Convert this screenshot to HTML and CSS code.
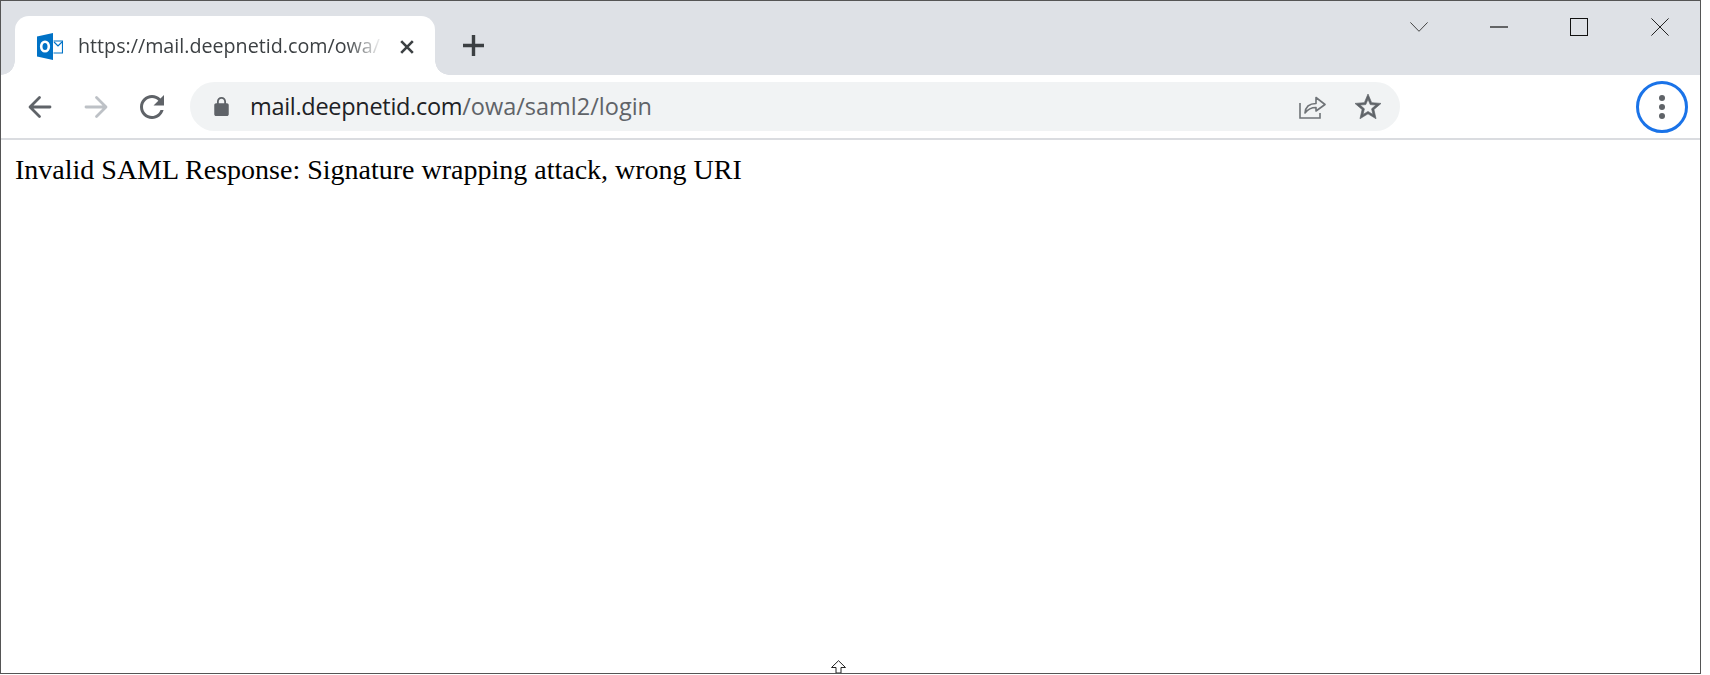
FILE: index.html
```html
<!DOCTYPE html>
<html lang="en">
<head>
<meta charset="utf-8">
<title>Invalid SAML Response</title>
<link rel="stylesheet" href="styles.css">
</head>
<body>
<div class="window">
  <header class="tabstrip">
    <div class="tab">
      <svg class="favicon" width="26" height="27" viewBox="0 0 26 27">
        <path d="M0 3.5 16 0V27L0 23.500Z" fill="#0072c6"/>
        <ellipse cx="8" cy="13.500" rx="3.800" ry="4.800" fill="none" stroke="#fff" stroke-width="2.600"/>
        <path d="M16.500 8H25.500V20H16.500" fill="#fff" stroke="#0072c6" stroke-width="1.200"/>
        <path d="M17 9 21 13 25 9" fill="none" stroke="#0072c6" stroke-width="1.200"/>
      </svg>
      <span class="tab-title">https://mail.deepnetid.com/owa/</span>
      <svg class="tab-close" width="14" height="14" viewBox="0 0 14 14"><path d="M1.200 1.200 12.800 12.800M12.800 1.200 1.200 12.800" stroke="#3c4043" stroke-width="2.600"/></svg>
    </div>
    <svg class="new-tab" width="21" height="21" viewBox="0 0 21 21"><path d="M10.500 0V21M0 10.500H21" stroke="#3c4043" stroke-width="3.400"/></svg>
    <div class="controls">
      <div class="control"><svg width="18" height="10" viewBox="0 0 18 10"><path d="M.4.400 9 9.300 17.600.400" fill="none" stroke="#444" stroke-width="1"/></svg></div>
      <div class="control"><svg width="18" height="2" viewBox="0 0 18 2"><path d="M0 1H18" stroke="#111" stroke-width="1.200"/></svg></div>
      <div class="control"><svg width="18" height="18" viewBox="0 0 18 18"><rect x=".5" y=".5" width="17" height="17" fill="none" stroke="#111" stroke-width="1"/></svg></div>
      <div class="control"><svg width="18" height="18" viewBox="0 0 18 18"><path d="M.4.400 17.600 17.600M17.600.400 .4 17.600" stroke="#222" stroke-width="1"/></svg></div>
    </div>
  </header>
  <nav class="toolbar">
    <svg class="nav-icon" width="24" height="24" viewBox="0 0 24 24"><path d="M22 12H2.500M11.500 2.500 2 12l9.500 9.500" fill="none" stroke="#5f6368" stroke-width="2.800" stroke-linecap="round" stroke-linejoin="round"/></svg>
    <svg class="nav-icon" width="24" height="24" viewBox="0 0 24 24"><path d="M2 12H21.500M12.500 2.500 22 12l-9.500 9.500" fill="none" stroke="#bdc1c6" stroke-width="2.800" stroke-linecap="round" stroke-linejoin="round"/></svg>
    <svg class="reload" width="24" height="24" viewBox="4 4 16 16"><path fill="#5f6368" d="M17.650 6.350C16.200 4.900 14.210 4 12 4c-4.420 0-7.990 3.580-7.990 8s3.570 8 7.990 8c3.730 0 6.840-2.550 7.730-6h-2.080c-.82 2.330-3.040 4-5.650 4-3.310 0-6-2.690-6-6s2.690-6 6-6c1.660 0 3.140.69 4.220 1.780L13 11h7V4l-2.350 2.350z"/></svg>
    <div class="omnibox">
      <svg class="lock" width="15" height="19" viewBox="4 1 16 21"><path fill="#5f6368" d="M18 8h-1V6c0-2.760-2.240-5-5-5S7 3.240 7 6v2H6c-1.100 0-2 .9-2 2v10c0 1.100.9 2 2 2h12c1.100 0 2-.9 2-2V10c0-1.100-.9-2-2-2zM9 6c0-1.660 1.340-3 3-3s3 1.340 3 3v2H9V6z"/></svg>
      <span class="url"><span class="host">mail.deepnetid.com</span>/owa/saml2/login</span>
      <svg class="share" width="27" height="24" viewBox="0 0 27 24"><path d="M1 8V23H21V18" fill="none" stroke="#6f7377" stroke-width="1.600"/><path d="M6 18C6.500 11.500 11 8.500 17 8.500V2.500L26 9.500 17 16V12.500C12 12.500 9 14 6 18Z" fill="none" stroke="#6f7377" stroke-width="1.600" stroke-linejoin="round"/></svg>
      <svg class="star" width="26" height="25" viewBox="2 2 20 19.200"><path fill="#5f6368" stroke="#5f6368" stroke-width=".5" d="M22 9.240l-7.190-.62L12 2 9.190 8.630 2 9.240l5.460 4.730L5.820 21 12 17.270 18.180 21l-1.630-7.030L22 9.240zM12 15.400l-3.760 2.270 1-4.280-3.320-2.880 4.380-.38L12 6.100l1.710 4.040 4.380.38-3.320 2.880 1 4.280L12 15.400z"/></svg>
    </div>
    <div class="menu-ring">
      <span class="dot"></span><span class="dot"></span><span class="dot"></span>
    </div>
  </nav>
  <main class="content">Invalid SAML Response: Signature wrapping attack, wrong URI</main>
  <svg class="cursor" width="17" height="13" viewBox="0 0 17 13"><path d="M8.500.7 15.500 7.500H11V13H6V7.500H1.500Z" fill="#fff" stroke="#222" stroke-width="1"/></svg>
</div>
</body>
</html>
```
FILE: styles.css
```css
* { box-sizing: border-box; }
html, body { margin: 0; padding: 0; background: #fff; }
body { height: 675px; overflow: hidden; }

.window {
  position: relative;
  width: 1701px;
  height: 674px;
  border: 1px solid #555;
  display: flex;
  flex-direction: column;
  overflow: hidden;
}

.tabstrip {
  height: 74px;
  flex: none;
  background: #dee1e6;
  display: flex;
  align-items: flex-start;
}

.tab {
  position: relative;
  width: 420px;
  height: 59px;
  margin: 15px 0 0 14px;
  padding: 16px 0 0 22px;
  background: #fff;
  border-radius: 14px 14px 0 0;
  display: flex;
  align-items: flex-start;
}
.tab::before, .tab::after {
  content: "";
  position: absolute;
  bottom: 0;
  width: 14px;
  height: 14px;
}
.tab::before { left: -14px; background: radial-gradient(circle at 0 0, #dee1e6 13.500px, #fff 14px); }
.tab::after { right: -14px; background: radial-gradient(circle at 100% 0, #dee1e6 13.500px, #fff 14px); }

.favicon { flex: none; margin-top: 1px; }
.tab-title {
  flex: none;
  width: 305px;
  margin-left: 15px;
  font: 19.700px/28px "Open Sans", "Noto Sans", sans-serif;
  color: #3c4043;
  white-space: nowrap;
  -webkit-mask-image: linear-gradient(to right, #000 88%, transparent 100%);
  mask-image: linear-gradient(to right, #000 88%, transparent 100%);
}
.tab-close { flex: none; margin: 8px 0 0 17px; }
.new-tab { flex: none; margin: 34px 0 0 28px; }

.controls { margin-left: auto; display: flex; }
.control {
  width: 80px;
  height: 52px;
  display: flex;
  align-items: center;
  justify-content: center;
}
.control:nth-child(3) { margin-right: 1px; }

.toolbar {
  height: 65px;
  flex: none;
  padding-left: 27px;
  background: #fff;
  border-bottom: 2px solid #dadce0;
  display: flex;
  align-items: center;
}
.nav-icon { flex: none; margin-right: 32px; }
.reload { flex: none; margin-right: 26px; }

.omnibox {
  width: 1210px;
  height: 49px;
  padding-left: 24px;
  background: #f1f3f4;
  border-radius: 25px;
  display: flex;
  align-items: center;
}
.lock { flex: none; }
.url {
  margin: 0 0 2px 21px;
  font: 23.500px/32px "Open Sans", "Noto Sans", sans-serif;
  color: #5f6368;
  white-space: nowrap;
}
.host { color: #202124; letter-spacing: -.3px; }
.share { flex: none; margin-left: auto; }
.star { flex: none; margin: 0 19px 0 29px; }

.menu-ring {
  width: 52px;
  height: 52px;
  margin-left: 236px;
  border: 3px solid #1a73e8;
  border-radius: 50%;
  display: flex;
  flex-direction: column;
  align-items: center;
  justify-content: center;
  gap: 3px;
}
.dot { width: 6px; height: 6px; border-radius: 50%; background: #5f6368; }

.content {
  flex: 1;
  padding: 14px 0 0 14px;
  font: 28px/32px "Liberation Serif", serif;
  color: #000;
}

.cursor { position: absolute; left: 829px; bottom: 0; }
```
